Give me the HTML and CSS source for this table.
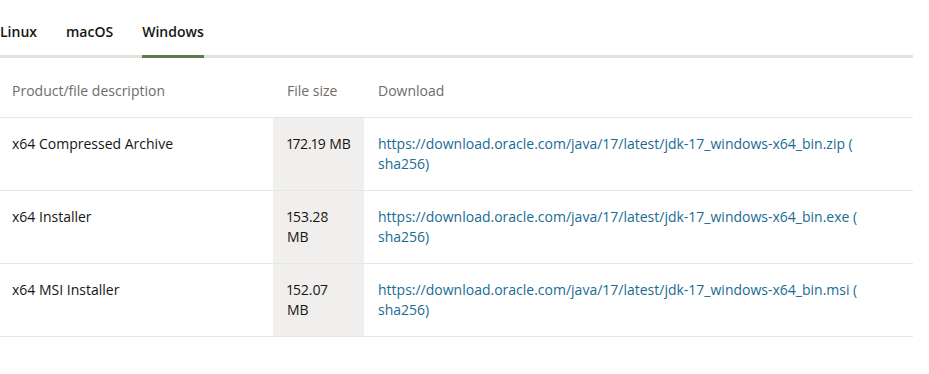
FILE: index.html
```html
<!DOCTYPE html>
<html>
  <head>
    <meta charset="UTF-8" />
    <title>JDK 17 Downloads</title>
    <link rel="stylesheet" href="styles.css">
  </head>
  <body>
    <div class="tabs">
      <a class="tab" href="#linux">Linux</a>
      <a class="tab" href="#macos">macOS</a>
      <a class="tab active" href="#windows">Windows</a>
    </div>

    <table class="downloads">
      <thead>
        <tr>
          <th class="col-desc">Product/file description</th>
          <th class="col-size">File size</th>
          <th class="col-link">Download</th>
        </tr>
      </thead>
      <tbody>
        <tr>
          <td class="col-desc">x64 Compressed Archive</td>
          <td class="col-size">172.19 MB</td>
          <td class="col-link"><a href="#">https://download.oracle.com/java/17/latest/jdk-17_windows-x64_bin.zip</a> ( <a href="#">sha256</a>)</td>
        </tr>
        <tr>
          <td class="col-desc">x64 Installer</td>
          <td class="col-size">153.28 MB</td>
          <td class="col-link"><a href="#">https://download.oracle.com/java/17/latest/jdk-17_windows-x64_bin.exe</a> ( <a href="#">sha256</a>)</td>
        </tr>
        <tr>
          <td class="col-desc">x64 MSI Installer</td>
          <td class="col-size">152.07 MB</td>
          <td class="col-link"><a href="#">https://download.oracle.com/java/17/latest/jdk-17_windows-x64_bin.msi</a> ( <a href="#">sha256</a>)</td>
        </tr>
      </tbody>
    </table>
  </body>
</html>
```

FILE: styles.css
```css
body {
  margin: 0;
  font-family: "Open Sans", "Noto Sans", Arial, sans-serif;
  font-size: 14px;
  color: #161513;
  background-color: white;
  width: 913px;
}

.tabs {
  display: flex;
  gap: 29px;
  padding-top: 22px;
  border-bottom: 3px solid #e4e1dc;
}

.tab {
  display: block;
  padding-bottom: 13px;
  margin-bottom: -3px;
  border-bottom: 3px solid transparent;
  font-weight: 600;
  color: #161513;
  text-decoration: none;
  line-height: 20px;
}

.tab.active {
  border-bottom-color: #5b7b4b;
}

.downloads {
  width: 100%;
  margin-top: 7px;
  border-collapse: collapse;
  line-height: 20px;
}

th {
  font-weight: normal;
  text-align: left;
  color: #706c67;
  padding: 16px 14px;
}

td {
  vertical-align: top;
  padding: 16px 14px;
}

tr {
  border-bottom: 1px solid #e6e6e6;
}

.col-desc {
  width: 247px;
  padding-left: 12px;
}

.col-size {
  width: 64px;
  padding-right: 13px;
  font-variant-numeric: proportional-nums;
}

td.col-size {
  background-color: #f1efed;
}

td.col-link,
td.col-link a {
  color: #1a6b94;
  text-decoration: none;
}
```
